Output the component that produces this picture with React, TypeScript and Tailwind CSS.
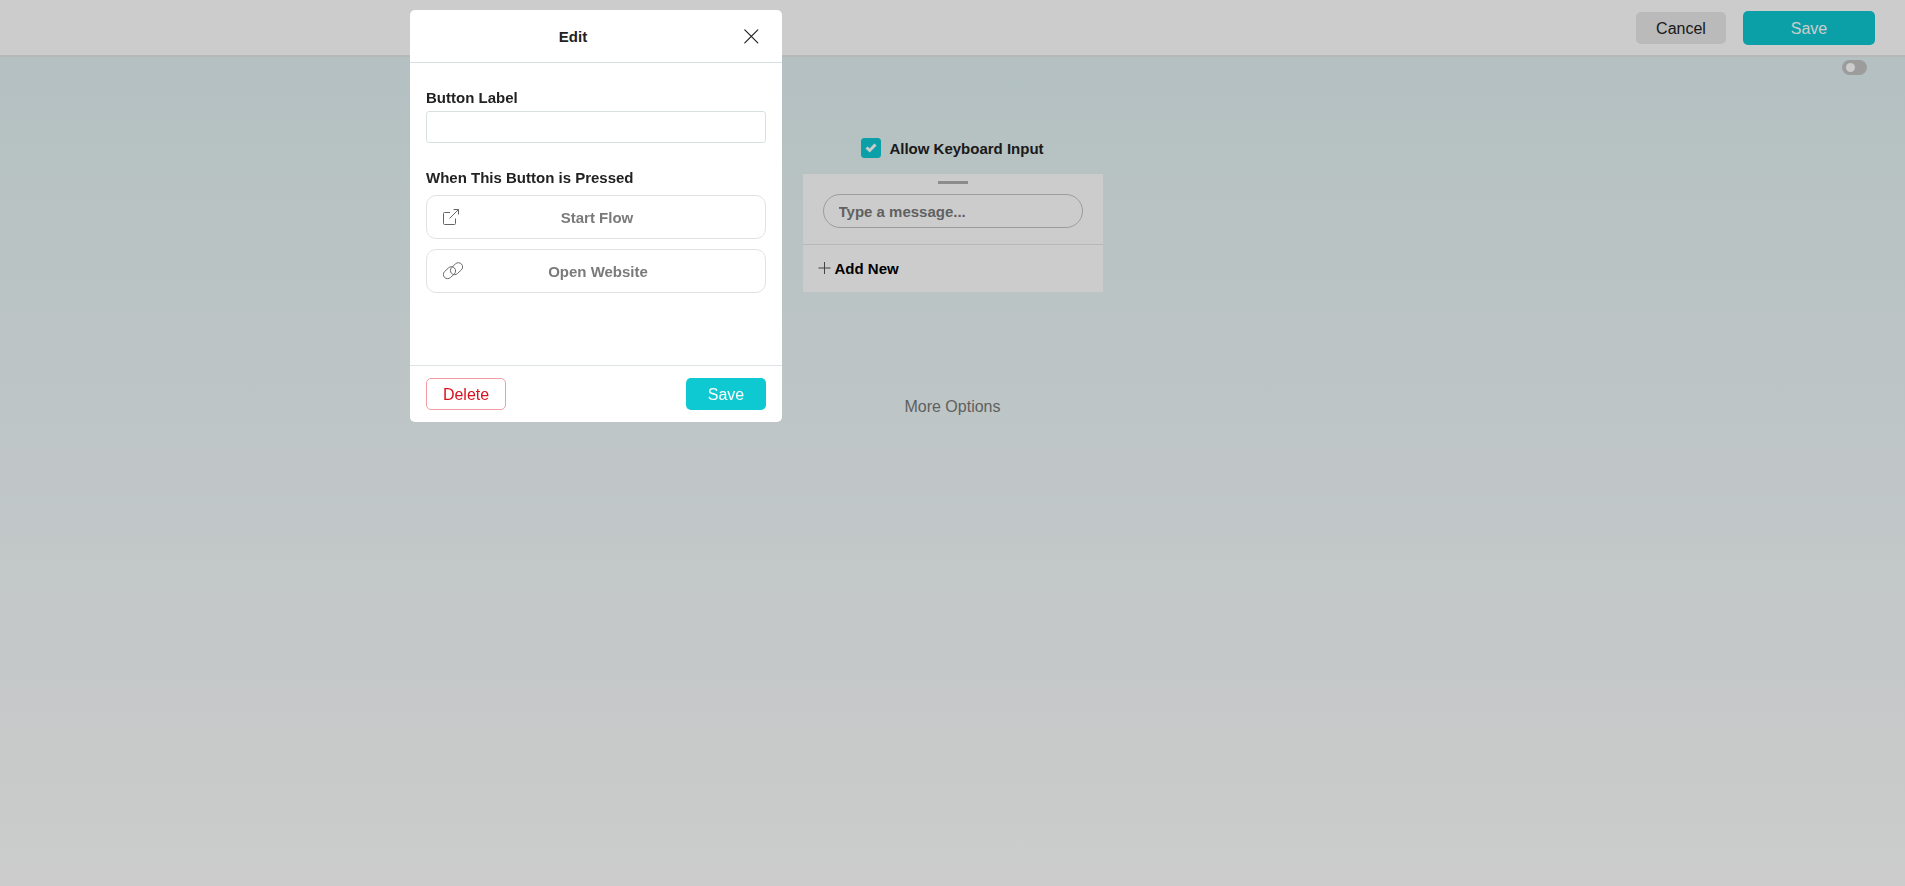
import { useState } from "react";

interface ActionProps {
  label: string;
  children: React.ReactNode;
}

const ActionButton = ({ label, children }: ActionProps) => {
  return (
    <button
      type="button"
      className="flex h-11 w-full items-center rounded-[10px] border border-[#dfe2e3] px-4 text-[15px] font-bold text-[#7a7a7a]"
    >
      {children}
      <span className="grow pt-0.5 text-center">{label}</span>
      <span className="w-4" />
    </button>
  );
};

const TopBar = () => {
  return (
    <header className="flex h-[57px] items-center justify-end gap-[17px] border-b-2 border-[#e4e6e6] bg-white pr-[30px]">
      <button
        type="button"
        className="h-8 w-[90px] rounded-[5px] bg-[#e9e9e9] pt-0.5 text-base leading-5 text-[#222]"
      >
        Cancel
      </button>
      <button
        type="button"
        className="h-[34px] w-[132px] rounded-[5px] bg-[#0ec8d2] pt-0.5 text-base leading-5 text-white"
      >
        Save
      </button>
    </header>
  );
};

const KeyboardCard = () => {
  return (
    <section className="mt-4 w-[300px] bg-white">
      <div className="flex flex-col items-center border-b border-[#e4e6e6] pt-[7px] pb-4">
        <div className="h-[3px] w-[30px] bg-[#b0b0b0]" />
        <input
          type="text"
          aria-label="Message"
          placeholder="Type a message..."
          className="mt-[10px] h-[34px] w-[260px] rounded-full border border-[#c4c4c4] px-[15px] text-[15px] font-bold outline-none placeholder:text-[#7a7a7a]"
        />
      </div>
      <button
        type="button"
        className="flex h-[47px] w-full items-center gap-1 px-[14px] text-[15px] font-bold text-black"
      >
        <svg
          viewBox="0 0 14 14"
          className="size-[14px] stroke-[#555]"
          aria-hidden="true"
        >
          <path d="M7.500 0v12M1.500 6h12" fill="none" />
        </svg>
        <span className="pt-0.5">Add New</span>
      </button>
    </section>
  );
};

const EditDialog = () => {
  const [label, setLabel] = useState("");

  return (
    <div
      role="dialog"
      aria-labelledby="edit-title"
      className="flex w-[372px] flex-col rounded-[5px] bg-white"
    >
      <div className="flex h-[53px] items-center border-b border-[#d8e1e2] px-5">
        <h2
          id="edit-title"
          className="grow pt-0.5 pr-[26px] text-center text-[15px] font-bold text-[#222]"
        >
          Edit
        </h2>
        <button type="button" aria-label="Close">
          <svg
            viewBox="0 0 20 20"
            className="size-5 stroke-[#222]"
            strokeWidth="1.2"
            strokeLinecap="round"
            aria-hidden="true"
          >
            <path d="M2.800 3.800l13 13M15.800 3.800l-13 13" fill="none" />
          </svg>
        </button>
      </div>

      <div className="flex flex-col px-4 pt-[23px] pb-[72px]">
        <label
          htmlFor="button-label"
          className="mb-px text-[15px] leading-6 font-bold text-[#222]"
        >
          Button Label
        </label>
        <input
          id="button-label"
          type="text"
          value={label}
          onChange={(e) => setLabel(e.target.value)}
          className="h-8 rounded-[3px] border border-[#d8e1e2] px-2 text-base outline-none"
        />
        <h3 className="mt-[23px] mb-[5px] text-[15px] leading-6 font-bold text-[#222]">
          When This Button is Pressed
        </h3>
        <div className="flex flex-col gap-[10px]">
          <ActionButton label="Start Flow">
            <svg
              viewBox="0 0 18 18"
              className="size-[18px] stroke-[#666]"
              fill="none"
              aria-hidden="true"
            >
              <path d="M7 4.500H1.500a1 1 0 0 0-1 1v10a1 1 0 0 0 1 1h10a1 1 0 0 0 1-1V10.500M6.500 10.500L15.500 1.500M10.500 1.500h5v5" />
            </svg>
          </ActionButton>
          <ActionButton label="Open Website">
            <svg
              viewBox="0 0 20 18"
              className="h-[18px] w-5 stroke-[#666]"
              fill="none"
              strokeWidth="0.9"
              aria-hidden="true"
            >
              <rect
                x="-6.800"
                y="-4.200"
                width="13.600"
                height="8.400"
                rx="4.200"
                transform="translate(6.500 10.700) rotate(-43)"
              />
              <rect
                x="-6.800"
                y="-4.200"
                width="13.600"
                height="8.400"
                rx="4.200"
                transform="translate(13.500 6.700) rotate(-43)"
              />
            </svg>
          </ActionButton>
        </div>
      </div>

      <div className="flex h-[57px] items-center justify-between border-t border-[#dde3e4] px-4">
        <button
          type="button"
          className="h-8 w-20 rounded-[5px] border border-[#f29ca5] pt-px text-base leading-5 text-[#d9101f]"
        >
          Delete
        </button>
        <button
          type="button"
          className="h-8 w-20 rounded-[5px] bg-[#0ec8d2] pt-px text-base leading-5 text-white"
        >
          Save
        </button>
      </div>
    </div>
  );
};

const App = () => {
  const [allowInput, setAllowInput] = useState(true);
  const [enabled, setEnabled] = useState(false);

  return (
    <div className="flex min-h-screen flex-col bg-linear-to-b from-[#dff0f1] to-white font-['Liberation_Sans',Arial,sans-serif]">
      <TopBar />

      <div className="flex justify-end pt-[3px] pr-[38px]">
        <input
          type="checkbox"
          role="switch"
          aria-label="Enabled"
          checked={enabled}
          onChange={() => setEnabled(!enabled)}
          className="flex h-[15px] w-[25px] appearance-none items-center rounded-full bg-[#c4c4c4] px-1 before:size-[9px] before:rounded-full before:bg-white checked:justify-end checked:bg-[#0ec8d2]"
        />
      </div>

      <main className="flex flex-col items-center pt-[63px]">
        <label className="flex h-5 items-center gap-2 text-[15px] font-bold text-[#222]">
          <span className="grid size-5 place-items-center">
            <input
              type="checkbox"
              checked={allowInput}
              onChange={() => setAllowInput(!allowInput)}
              className="col-start-1 row-start-1 size-5 appearance-none rounded-[3px] border border-[#0ec8d2] checked:bg-[#0ec8d2]"
            />
            {allowInput && (
              <svg
                viewBox="0 0 12 10"
                className="pointer-events-none col-start-1 row-start-1 h-[10px] w-3 stroke-white"
                fill="none"
                strokeWidth="3"
                aria-hidden="true"
              >
                <path d="M1.500 4.500l3.200 3L10.500 1.500" />
              </svg>
            )}
          </span>
          <span className="pt-0.5">Allow Keyboard Input</span>
        </label>
        <KeyboardCard />
        <button type="button" className="mt-[103px] text-base text-[#777]">
          More Options
        </button>
      </main>

      <div className="fixed inset-0 flex items-start justify-center bg-black/20 pt-[10px] pr-[713px]">
        <EditDialog />
      </div>
    </div>
  );
};

export default App;
